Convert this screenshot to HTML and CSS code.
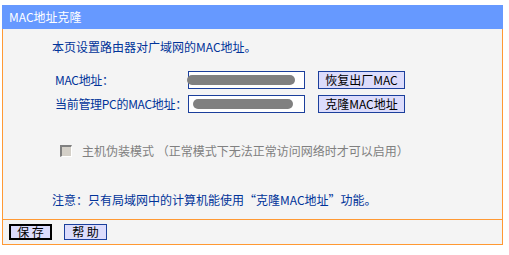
FILE: index.html
```html
<!DOCTYPE html>
<html>
<head>
<meta charset="utf-8">
<link rel="stylesheet" href="styles.css">
</head>
<body>
<div class="panel">
  <div class="header">MAC地址克隆</div>
  <div class="content">
    <div class="intro">本页设置路由器对广域网的MAC地址。</div>
    <div class="form">
      <div class="label">MAC地址：</div>
      <div class="field"><span class="blur blur1"></span></div>
      <div class="btn">恢复出厂MAC</div>
      <div class="label">当前管理PC的MAC地址：</div>
      <div class="field"><span class="blur blur2"></span></div>
      <div class="btn">克隆MAC地址</div>
    </div>
    <div class="check-row">
      <span class="checkbox"></span>
      <span class="check-text">主机伪装模式 （正常模式下无法正常访问网络时才可以启用）</span>
    </div>
    <div class="note">注意：只有局域网中的计算机能使用“克隆MAC地址”功能。</div>
  </div>
  <div class="footer">
    <div class="fbtn fbtn-default">保 存</div>
    <div class="fbtn">帮 助</div>
  </div>
</div>
</body>
</html>
```

FILE: styles.css
```css
html, body {
  margin: 0;
  padding: 0;
  background: #ffffff;
}
body {
  font-family: "Noto Sans CJK SC", "DejaVu Sans", sans-serif;
  font-size: 12px;
  color: #003399;
}
.panel {
  margin: 5px 0 0 2px;
  width: 501px;
}
.header {
  height: 24px;
  line-height: 24px;
  background: #6699ff;
  color: #ffffff;
  padding-left: 7px;
  font-size: 12px;
}
.content {
  height: 190px;
  background: #f4f4f4;
  border-left: 1px solid #ff9933;
  border-right: 1px solid #ff9933;
  box-sizing: border-box;
  padding-top: 10px;
}
.intro {
  line-height: 16px;
  padding-left: 49px;
}
.form {
  display: grid;
  grid-template-columns: 133px 117px 100px;
  column-gap: 0;
  row-gap: 6px;
  grid-auto-rows: 18px;
  margin-top: 16px;
  padding-left: 52px;
}
.label {
  line-height: 18px;
  white-space: nowrap;
  letter-spacing: -0.3px;
}
.field {
  border: 1px solid #1b3f9c;
  background: #ffffff;
  box-sizing: border-box;
  display: flex;
  align-items: center;
  padding: 0 4px 0 0;
}
.blur {
  display: block;
  height: 10px;
  background: #808080;
  border-radius: 5px;
}
.blur1 {
  width: 108px;
  margin-left: -2px;
}
.blur2 {
  width: 100px;
  margin-left: 4px;
}
.btn {
  margin-left: 13px;
  border: 1px solid #1b3f9c;
  background: #dcdcfc;
  color: #000000;
  box-sizing: border-box;
  text-align: center;
  line-height: 16px;
  white-space: nowrap;
}
.check-row {
  display: flex;
  align-items: center;
  height: 16px;
  margin-top: 30px;
  padding-left: 57px;
}
.checkbox {
  width: 12px;
  height: 12px;
  box-sizing: border-box;
  background: #d4d0c8;
  border-top: 2px solid #808080;
  border-left: 2px solid #808080;
  border-right: 1px solid #ffffff;
  border-bottom: 1px solid #ffffff;
  margin-right: 10px;
}
.check-text {
  color: #808080;
  line-height: 16px;
}
.note {
  margin-top: 33px;
  line-height: 16px;
  padding-left: 49px;
}
.footer {
  height: 26px;
  background: #f4f4f4;
  border: 1px solid #ff9933;
  box-sizing: border-box;
  display: flex;
  align-items: flex-start;
  gap: 12px;
  padding: 4px 0 0 6px;
}
.fbtn {
  width: 43px;
  height: 16px;
  box-sizing: border-box;
  border: 1px solid #1b3f9c;
  background: #dcdcfc;
  color: #000000;
  text-align: center;
  line-height: 14px;
  font-size: 12px;
}
.fbtn-default {
  border: 2px solid #000000;
  line-height: 12px;
}
```
